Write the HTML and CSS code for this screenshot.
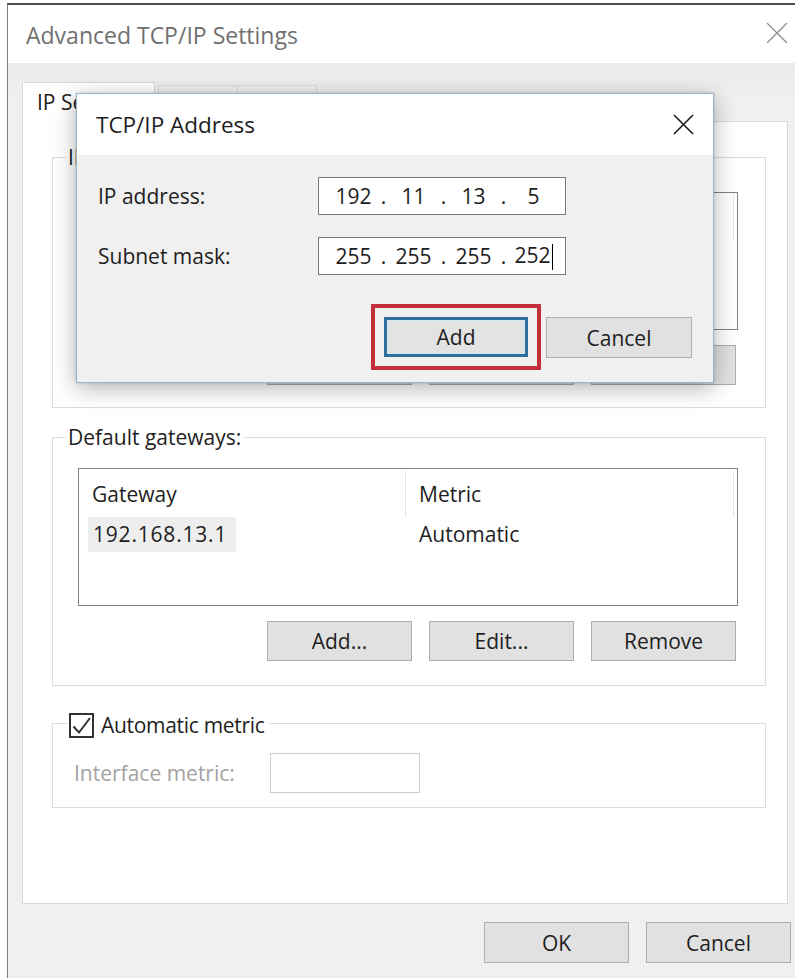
FILE: index.html
```html
<!DOCTYPE html>
<html lang="en">
<head>
<meta charset="utf-8">
<title>Advanced TCP/IP Settings</title>
<link rel="stylesheet" href="styles.css">
</head>
<body>
<div class="window">
  <header class="titlebar">
    <span class="title">Advanced TCP/IP Settings</span>
    <svg class="win-close" viewBox="0 0 22 20" aria-hidden="true">
      <path d="M1 0 L21 20 M21 0 L1 20" />
    </svg>
  </header>

  <div class="client">
    <div class="tabs">
      <div class="tab active">IP Settings</div>
      <div class="tab second"></div>
      <div class="tab third"></div>
    </div>

    <div class="panel">
      <fieldset class="group group-ip">
        <legend class="legend">IP addresses</legend>
        <div class="group-body ip-body">
          <div class="list">
            <div class="list-head">
              <span class="col"></span>
              <span class="col"></span>
            </div>
          </div>
          <div class="btn-row">
            <button class="btn"></button>
            <button class="btn"></button>
            <button class="btn"></button>
          </div>
        </div>
      </fieldset>

      <fieldset class="group group-gw">
        <legend class="legend">Default gateways:</legend>
        <div class="group-body gw-body">
          <div class="list">
            <div class="list-head">
              <span class="col">Gateway</span>
              <span class="col">Metric</span>
            </div>
            <div class="list-row">
              <span class="cell first"><span class="sel">192.168.13.1</span></span>
              <span class="cell">Automatic</span>
            </div>
          </div>
          <div class="btn-row">
            <button class="btn">Add...</button>
            <button class="btn">Edit...</button>
            <button class="btn">Remove</button>
          </div>
        </div>
      </fieldset>

      <fieldset class="group group-metric">
        <legend class="legend check-legend">
          <svg class="checkbox" viewBox="0 0 25 25" aria-hidden="true">
            <rect x="1" y="1" width="23" height="23" />
            <path d="M4.5 13.5 L10 19.5 L21 5" />
          </svg>
          <span>Automatic metric</span>
        </legend>
        <div class="group-body metric-body">
          <span class="metric-label">Interface metric:</span>
          <span class="metric-input"></span>
        </div>
      </fieldset>
    </div>

    <div class="footer">
      <button class="btn btn-footer">OK</button>
      <button class="btn btn-footer">Cancel</button>
    </div>
  </div>

  <div class="dialog">
    <header class="dlg-titlebar">
      <span class="dlg-title">TCP/IP Address</span>
      <svg class="dlg-close" viewBox="0 0 21 21" aria-hidden="true">
        <path d="M1 1 L20 20 M20 1 L1 20" />
      </svg>
    </header>
    <div class="dlg-body">
      <div class="dlg-form">
        <span class="dlg-label">IP address:</span>
        <div class="ipfield">
          <span class="oct">192</span><span class="dot">.</span>
          <span class="oct">11</span><span class="dot">.</span>
          <span class="oct">13</span><span class="dot">.</span>
          <span class="oct">5</span>
        </div>
        <span class="dlg-label">Subnet mask:</span>
        <div class="ipfield">
          <span class="oct">255</span><span class="dot">.</span>
          <span class="oct">255</span><span class="dot">.</span>
          <span class="oct">255</span><span class="dot">.</span>
          <span class="oct">252<span class="caret"></span></span>
        </div>
      </div>
      <div class="dlg-buttons">
        <button class="btn btn-default">Add</button>
        <button class="btn btn-cancel">Cancel</button>
      </div>
    </div>
  </div>
</div>
</body>
</html>
```

FILE: styles.css
```css
* {
  box-sizing: border-box;
}

html,
body {
  margin: 0;
}

body {
  width: 795px;
  height: 978px;
  overflow: hidden;
  padding-top: 3px;
  background: #ffffff;
  font-family: "Open Sans", "Noto Sans", sans-serif;
  font-size: 21px;
  line-height: 26px;
  color: #1e1e1e;
}

/* ---- main window ---- */
.window {
  position: relative;
  margin-left: 7px;
  width: 797px;
  height: 975px;
  border-top: 2px solid #4f4f4f;
  border-left: 1px solid #808080;
  background: #f0f0f0;
}

.titlebar {
  height: 58px;
  background: #ffffff;
  display: flex;
  align-items: center;
  justify-content: space-between;
  padding: 2px 16px 0 18px;
}

.title {
  color: #707070;
  font-size: 23px;
  line-height: 30px;
}

.win-close {
  width: 22px;
  height: 20px;
  margin-top: -4px;
  fill: none;
  stroke: #8a8a8a;
  stroke-width: 1.3;
}

.client {
  padding: 19px 0 0 14px;
  background: linear-gradient(#ebebeb, #f0f0f0 40px);
}

/* ---- tab strip ---- */
.tabs {
  display: flex;
  align-items: flex-start;
  height: 40px;
  margin-bottom: -1px;
  position: relative;
  z-index: 1;
}

.tab {
  height: 36px;
  margin-top: 3px;
  padding: 9px 14px 0;
  line-height: 20px;
  border: 1px solid #d9d9d9;
  border-bottom: none;
  background: #f0f0f0;
  white-space: nowrap;
  overflow: hidden;
}

.tab.active {
  width: 133px;
  height: 40px;
  margin-top: 0;
  background: #ffffff;
}

.tab.second {
  width: 80px;
  margin-left: 3px;
}

.tab.third {
  width: 80px;
  margin-left: -1px;
}

.panel {
  width: 766px;
  height: 783px;
  border: 1px solid #d9d9d9;
  background: #ffffff;
  padding: 22px 0 0 29px;
}

/* ---- group boxes ---- */
.group {
  width: 714px;
  margin: 0;
  padding: 0;
  border: 1px solid #dcdcdc;
  min-width: 0;
}

.legend {
  margin-left: 13px;
  padding: 0 3px 0 2px;
  height: 26px;
  line-height: 26px;
  background: #ffffff;
}

.group-gw {
  margin-top: 16px;
}

.group-metric {
  margin-top: 22px;
}

.group-body {
  padding-left: 25px;
  padding-right: 27px;
}

.ip-body {
  padding-top: 22px;
  padding-bottom: 22px;
}

.gw-body {
  padding-top: 18px;
  padding-bottom: 24px;
}

.list {
  height: 138px;
  border: 1px solid #828282;
  background: #ffffff;
}

.list-head {
  display: flex;
  height: 47px;
  margin-top: 1px;
}

.col {
  width: 327px;
  padding-left: 13px;
  border-right: 1px solid #e6e6e6;
  display: flex;
  align-items: center;
}

.col + .col {
  width: 328px;
}

.list-row {
  display: flex;
  height: 35px;
  line-height: 35px;
}

.cell {
  width: 327px;
  padding-left: 13px;
}

.cell.first {
  padding-left: 9px;
}

.sel {
  display: inline-block;
  height: 35px;
  padding: 0 9px 0 5px;
  letter-spacing: 0.8px;
  background: #eeeeee;
}

.btn-row {
  display: flex;
  justify-content: flex-end;
  gap: 17px;
  margin-top: 15px;
  margin-right: 2px;
}

.btn {
  width: 145px;
  height: 40px;
  padding: 0;
  border: 1px solid #adadad;
  background: #e1e1e1;
  font: inherit;
  color: #1e1e1e;
}

/* ---- automatic metric ---- */
.check-legend {
  height: 30px;
  display: flex;
  align-items: flex-end;
  gap: 7px;
  margin-left: 14px;
  padding: 0 4px 0 2px;
}

.check-legend span {
  line-height: 26px;
  letter-spacing: -0.3px;
}

.checkbox {
  width: 25px;
  height: 25px;
  flex: none;
}

.checkbox rect {
  fill: #ffffff;
  stroke: #333333;
  stroke-width: 2;
}

.checkbox path {
  fill: none;
  stroke: #333333;
  stroke-width: 2;
}

.metric-body {
  display: flex;
  align-items: center;
  padding: 15px 0 14px 21px;
}

.metric-label {
  width: 196px;
  color: #a2a2a2;
}

.metric-input {
  width: 150px;
  height: 40px;
  border: 1px solid #cccccc;
  background: #ffffff;
}

/* ---- dialog buttons ---- */
.footer {
  display: flex;
  justify-content: flex-end;
  gap: 17px;
  padding: 18px 13px 0 0;
}

.btn-footer {
  height: 41px;
}

/* ---- TCP/IP Address dialog (modal, floats over the window) ---- */
.dialog {
  position: absolute;
  z-index: 5;
  left: 68px;
  top: 88px;
  width: 638px;
  height: 290px;
  border: 1px solid #94b4cf;
  background: #f0f0f0;
  box-shadow: 0 5px 22px rgba(0, 0, 0, 0.3), 0 0 3px rgba(0, 0, 0, 0.15);
}

.dlg-titlebar {
  height: 61px;
  background: #ffffff;
  display: flex;
  align-items: center;
  justify-content: space-between;
  padding: 0 19px 0 19px;
}

.dlg-title {
  font-size: 22.5px;
  line-height: 24px;
}

.dlg-close {
  width: 21px;
  height: 21px;
  fill: none;
  stroke: #1a1a1a;
  stroke-width: 1.6;
}

.dlg-body {
  padding: 22px 21px 0 21px;
}

.dlg-form {
  display: grid;
  grid-template-columns: 220px 248px;
  row-gap: 22px;
  align-items: center;
}

.ipfield {
  display: flex;
  align-items: center;
  height: 38px;
  padding-left: 12px;
  border: 1px solid #7a7a7a;
  background: #ffffff;
}

.oct {
  width: 45px;
  text-align: center;
}

.dot {
  width: 15px;
  text-align: center;
}

.caret {
  display: inline-block;
  width: 1px;
  height: 26px;
  margin-left: 1px;
  vertical-align: middle;
  background: #000000;
}

.dlg-buttons {
  display: flex;
  justify-content: flex-end;
  gap: 18px;
  margin-top: 42px;
}

.btn-default {
  width: 144px;
  border: 3px solid #2f6e9c;
  box-shadow: inset 0 0 0 1px #d4ecf8;
  background: #e3e3e3;
  outline: 4px solid #c22f3a;
  outline-offset: 9px;
}

.btn-cancel {
  width: 146px;
  height: 41px;
}
```
